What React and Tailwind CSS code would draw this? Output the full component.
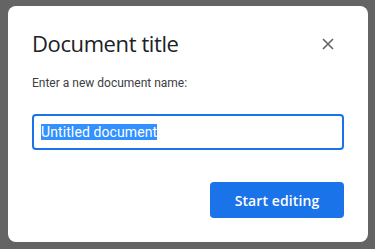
import React from 'react';

const App = () => {
  return (
    <div className="w-[375px] h-[249px] bg-[#646464] pt-[6px] pl-[8px]" style={{ fontFamily: 'Roboto, "Open Sans", sans-serif' }}>
      <div className="w-[360px] h-[236px] bg-white rounded-[8px] px-[24px] pt-[23px] flex flex-col">
        <div className="flex items-center justify-between">
          <h2 className="text-[22px] leading-[28px] text-[#202124] font-['Open_Sans',sans-serif] tracking-[-0.4px]">Document title</h2>
          <button className="w-[24px] h-[24px] flex items-center justify-center text-[#5f6368] mr-[4px] mt-[2px]">
            <svg width="14" height="14" viewBox="0 0 14 14" fill="none" stroke="currentColor" strokeWidth="1.6">
              <path d="M2 2L12 12M12 2L2 12" />
            </svg>
          </button>
        </div>
        <p className="mt-[18px] text-[12px] leading-[16px] text-[#3c4043]">Enter a new document name:</p>
        <div className="mt-[23px] h-[36px] border-2 border-[#1a73e8] rounded-[4px] flex items-center px-[7px]">
          <span className="bg-[#3390ff] text-white text-[14px] leading-[16px] tracking-[0.1px]">Untitled document</span>
        </div>
        <div className="flex justify-end mt-[32px]">
          <button className="w-[134px] h-[36px] bg-[#1a73e8] rounded-[4px] text-white text-[14px] font-semibold tracking-[0.1px] font-['Open_Sans',sans-serif]">
            Start editing
          </button>
        </div>
      </div>
    </div>
  );
};

export default App;
